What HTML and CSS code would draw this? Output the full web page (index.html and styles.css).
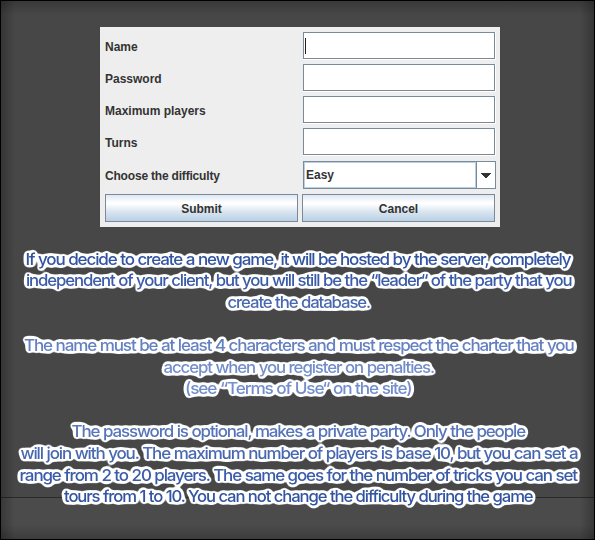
FILE: index.html
```html
<!DOCTYPE html>
<html lang="en">
<head>
<meta charset="utf-8">
<title>Create a game</title>
<link rel="stylesheet" href="styles.css">
</head>
<body>
<main class="window">
  <form class="panel">
    <div class="row"><label for="name">Name</label><div class="field"><input id="name" type="text"><i class="caret"></i></div></div>
    <div class="row"><label for="password">Password</label><div class="field"><input id="password" type="password"></div></div>
    <div class="row"><label for="players">Maximum players</label><div class="field"><input id="players" type="text"></div></div>
    <div class="row"><label for="turns">Turns</label><div class="field"><input id="turns" type="text"></div></div>
    <div class="row row-combo"><label>Choose the difficulty</label>
      <div class="combo"><span class="combo-value">Easy</span><span class="combo-arrow"><svg width="10" height="5" viewBox="0 0 10 5" shape-rendering="crispEdges"><path d="M0 0h10v1h-1v1h-1v1h-1v1h-1v1h-2v-1h-1v-1h-1v-1h-1v-1h-1z" fill="#333"/></svg></span></div>
    </div>
    <div class="actions"><button type="button">Submit</button><button type="button">Cancel</button></div>
  </form>
  <svg class="help" width="593" height="270" viewBox="1 240 593 270">
    <defs>
      <linearGradient id="ink" gradientUnits="userSpaceOnUse" x1="0" y1="252" x2="0" y2="505">
        <stop offset="0" stop-color="#2f519d"/>
        <stop offset=".12" stop-color="#3b5ca8"/>
        <stop offset=".5" stop-color="#7993cf"/>
        <stop offset=".88" stop-color="#3b5ca8"/>
        <stop offset="1" stop-color="#2f519d"/>
      </linearGradient>
      <filter id="halo" filterUnits="userSpaceOnUse" x="1" y="240" width="593" height="270" color-interpolation-filters="sRGB">
        <feGaussianBlur in="SourceAlpha" stdDeviation="1.9"/>
        <feComponentTransfer result="spread"><feFuncA type="linear" slope="20" intercept="-.7"/></feComponentTransfer>
        <feFlood flood-color="#fff"/>
        <feComposite in2="spread" operator="in" result="edge"/>
        <feMerge><feMergeNode in="edge"/><feMergeNode in="SourceGraphic"/></feMerge>
      </filter>
    </defs>
    <g class="outline-text" fill="url(#ink)" filter="url(#halo)">
      <text x="25.500" y="265" textLength="545" lengthAdjust="spacingAndGlyphs">If you decide to create a new game, it will be hosted by the server, completely</text>
      <text x="26" y="286" textLength="545.500" lengthAdjust="spacingAndGlyphs">independent of your client, but you will still be the “leader“ of the party that you</text>
      <text x="227.500" y="308" textLength="142.500" lengthAdjust="spacingAndGlyphs">create the database.</text>
      <text x="24" y="351" textLength="549.500" lengthAdjust="spacingAndGlyphs">The name must be at least 4 characters and must respect the charter that you</text>
      <text x="163.500" y="373" textLength="270.500" lengthAdjust="spacingAndGlyphs">accept when you register on penalties.</text>
      <text x="185" y="393.500" textLength="226.500" lengthAdjust="spacingAndGlyphs">(see “Terms of Use“ on the site)</text>
      <text x="71.500" y="437" textLength="453.500" lengthAdjust="spacingAndGlyphs">The password is optional, makes a private party. Only the people</text>
      <text x="20.500" y="459" textLength="557" lengthAdjust="spacingAndGlyphs">will join with you. The maximum number of players is base 10, but you can set a</text>
      <text x="19.500" y="481" textLength="557.500" lengthAdjust="spacingAndGlyphs">range from 2 to 20 players. The same goes for the number of tricks you can set</text>
      <text x="64" y="502" textLength="468.500" lengthAdjust="spacingAndGlyphs">tours from 1 to 10. You can not change the difficulty during the game</text>
    </g>
  </svg>
</main>
</body>
</html>
```
FILE: styles.css
```css
* { box-sizing: border-box; }

body {
  margin: 0;
  font-family: "Liberation Sans", Arial, sans-serif;
}

.window {
  display: flex;
  flex-direction: column;
  align-items: center;
  width: 595px;
  height: 540px;
  padding-top: 26px;
  border: 1px solid #000;
  overflow: hidden;
  background:
    linear-gradient(to right, rgba(0,0,0,.25), transparent 14px, transparent calc(100% - 14px), rgba(0,0,0,.25)),
    linear-gradient(to bottom, rgba(0,0,0,.2), transparent 14px, transparent calc(100% - 14px), rgba(0,0,0,.2)),
    linear-gradient(to bottom, #474747 496px, #292929 496px, #292929 497px, #4b4b4b 497px);
}

.panel {
  flex: none;
  width: 400px;
  height: 200px;
  margin-left: 5px;
  padding: 5px 4px 5px 5px;
  background: #eee;
  color: #333;
  font-size: 12px;
  font-weight: bold;
}

.row {
  display: grid;
  grid-template-columns: 198px 193px;
  height: 32px;
}

.row label {
  height: 28px;
  line-height: 31px;
}

.field {
  position: relative;
  width: 193px;
  height: 28px;
  border-right: 1px solid #fff;
  border-bottom: 1px solid #fff;
}

.field input {
  display: block;
  width: 192px;
  height: 27px;
  padding: 0 2px;
  border: 1px solid #7a8a99;
  border-radius: 0;
  outline: 0;
  background: #fff;
  font: inherit;
}

.caret {
  position: absolute;
  left: 2px;
  top: 6px;
  width: 1px;
  height: 16px;
  background: #222;
}

.row-combo {
  height: 34px;
  padding-top: 1px;
}

.row-combo label {
  letter-spacing: -.19px;
}

.combo {
  display: flex;
  height: 28px;
  border: 1px solid #7a8a99;
  background: #fff;
}

.combo-value {
  width: 172px;
  padding-left: 1px;
  border: 1px solid #b8cfe5;
  line-height: 24px;
}

.combo-arrow {
  display: flex;
  flex: 1;
  align-items: center;
  justify-content: center;
  border-left: 1px solid #7a8a99;
}

.actions {
  display: flex;
  gap: 4px;
}

.actions button {
  width: 193px;
  height: 28px;
  padding: 1px 0 0;
  border: 1px solid #7a8a99;
  border-radius: 0;
  background: linear-gradient(#dde8f3, #fff 30%, #fff 34%, #dce7f1 62%, #b8cfe5);
  color: #333;
  font: bold 12px "Liberation Sans", Arial, sans-serif;
}

.help {
  flex: none;
  display: block;
  margin-top: 13px;
}

.outline-text {
  font-family: Inter, "Open Sans", sans-serif;
  font-size: 16.5px;
  font-weight: 540;
  letter-spacing: -1.1px;
  word-spacing: .2px;
}
```
